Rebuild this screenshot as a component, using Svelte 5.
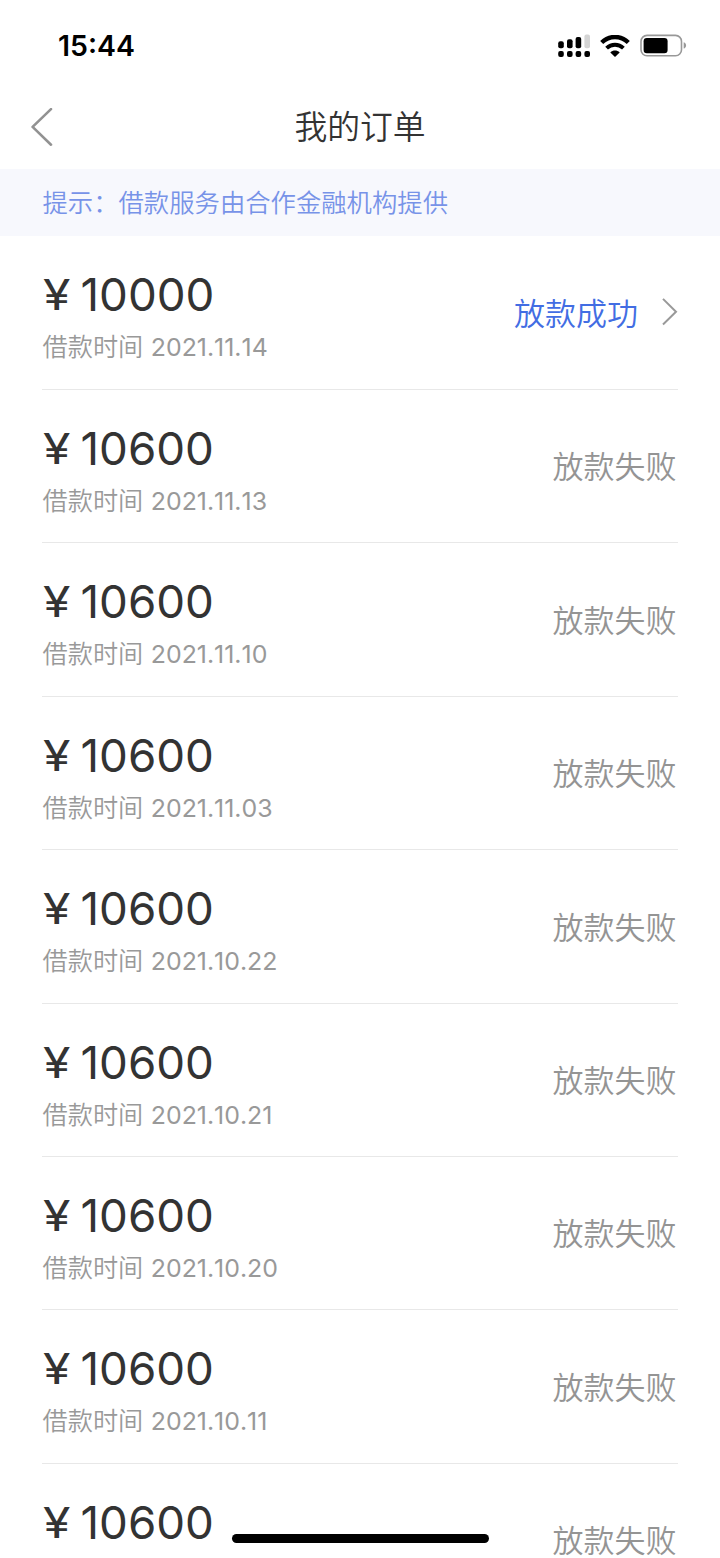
<script>
  const orders = [
    { amount: '10000', date: '2021.11.14', ok: true },
    { amount: '10600', date: '2021.11.13' },
    { amount: '10600', date: '2021.11.10' },
    { amount: '10600', date: '2021.11.03' },
    { amount: '10600', date: '2021.10.22' },
    { amount: '10600', date: '2021.10.21' },
    { amount: '10600', date: '2021.10.20' },
    { amount: '10600', date: '2021.10.11' },
    { amount: '10600', date: '' }
  ];
</script>

<div class="screen">
  <div class="status-bar">
    <span class="clock">15:44</span>
    <div class="indicators">
      <svg class="signal" width="33" height="24" viewBox="0 0 33 24">
        <rect x="0.2" y="7.2" width="5.6" height="7" rx="2" />
        <rect x="9" y="5.2" width="5.6" height="9" rx="2" />
        <rect x="17.6" y="3" width="5.6" height="11.2" rx="2" />
        <rect x="26.4" y="0.6" width="5.6" height="13.6" rx="2" fill="#d4d4d4" />
        <rect x="0.2" y="17" width="5.6" height="6" rx="2" />
        <rect x="9" y="17" width="5.6" height="6" rx="2" />
        <rect x="17.6" y="17" width="5.6" height="6" rx="2" />
        <rect x="26.4" y="17" width="5.6" height="6" rx="2" />
      </svg>
      <svg class="wifi" width="30" height="23" viewBox="0 0 30 23">
        <path d="M1.7 7.5C9.3 0.1 20.7 0.1 28.3 7.5" fill="none" stroke="#000" stroke-width="4.4" />
        <path d="M6.6 13.1C11.4 8.7 18.6 8.7 23.4 13.1" fill="none" stroke="#000" stroke-width="4" />
        <path d="M10.3 17.4C13 14.9 17 14.9 19.7 17.4L15 22Z" />
      </svg>
      <svg class="battery" width="47" height="24" viewBox="0 0 47 24">
        <rect x="1" y="1.4" width="40.5" height="20.4" rx="6" fill="none" stroke="#989898" stroke-width="1.6" />
        <rect x="3.6" y="4" width="24" height="15.2" rx="3.2" />
        <path d="M43.7 8.2C46.9 9.2 46.9 13.6 43.7 14.6Z" fill="#989898" />
      </svg>
    </div>
  </div>

  <header>
    <svg class="back" width="24" height="40" viewBox="0 0 24 40">
      <path d="M21 1.1L2.6 18.9L21 36.7" fill="none" stroke="#929292" stroke-width="2.6" stroke-linecap="round" stroke-linejoin="round" />
    </svg>
    <h1>我的订单</h1>
  </header>

  <div class="notice">提示：借款服务由合作金融机构提供</div>

  <main>
    {#each orders as order}
      <div class="order">
        <div class="info">
          <div class="amount"><span class="yen">¥</span><span>{order.amount}</span></div>
          {#if order.date}
            <div class="date"><span class="label">借款时间</span><span>{order.date}</span></div>
          {/if}
        </div>
        <div class="state" class:success={order.ok}>
          <span>{order.ok ? '放款成功' : '放款失败'}</span>
          {#if order.ok}
            <svg width="17" height="30" viewBox="0 0 17 30">
              <path d="M2 2.9L15 15.7L2 28.5" fill="none" stroke="#999" stroke-width="2" />
            </svg>
          {/if}
        </div>
      </div>
    {/each}
  </main>
  <div class="home-bar"></div>
</div>

<style>
  .screen {
    position: relative;
    width: 720px;
    height: 1558px;
    overflow: hidden;
    background: #fff;
    color: #333;
    font-family: Inter, "Noto Sans CJK SC", sans-serif;
  }
  .status-bar {
    height: 86px;
    box-sizing: border-box;
    padding: 6px 33px 0 58px;
    display: flex;
    align-items: center;
    justify-content: space-between;
    color: #000;
  }
  .clock {
    font-size: 28.5px;
    font-weight: 600;
    line-height: 34px;
  }
  .indicators {
    display: flex;
    align-items: center;
  }
  .signal { margin-right: 9px; }
  .wifi { margin-right: 10px; }
  header {
    height: 83px;
    display: grid;
    grid-template-columns: 60px 1fr 60px;
    align-items: center;
  }
  .back { margin-left: 30px; }
  h1 {
    margin: 0 0 1px;
    text-align: center;
    font-size: 32.8px;
    line-height: 48px;
    font-weight: 350;
  }
  .notice {
    height: 67px;
    padding-left: 42.5px;
    box-sizing: border-box;
    line-height: 67px;
    font-size: 25.35px;
    font-weight: 350;
    color: #7793e8;
    background: #f7f8fd;
  }
  main { padding: 0 42px; }
  .order {
    height: 153.45px;
    box-sizing: border-box;
    border-bottom: 1px solid #e8e8e8;
    display: flex;
    justify-content: space-between;
  }
  .order:first-child { height: 153.8px; }
  .info { padding-top: 31px; }
  .amount {
    display: flex;
    align-items: baseline;
    font-size: 45.7px;
    line-height: 55px;
  }
  .yen {
    width: 38.5px;
    font-size: 43px;
    transform: translate(1px, -1.5px) scaleX(1.16);
    transform-origin: left;
  }
  .date {
    display: flex;
    gap: 7.5px;
    margin-top: 7px;
    padding-left: 0.5px;
    font-size: 24.9px;
    line-height: 35px;
    color: #999;
    font-kerning: none;
  }
  .label {
    font-size: 25.2px;
    font-weight: 350;
  }
  .state {
    display: flex;
    align-items: center;
    height: 150px;
    padding-right: 1.5px;
    font-size: 31px;
    font-weight: 350;
    color: #949494;
  }
  .state.success {
    padding-right: 0;
    gap: 23px;
    height: 150px;
    color: #426de3;
  }
  .home-bar {
    position: absolute;
    left: 232px;
    top: 1534px;
    width: 257px;
    height: 9px;
    border-radius: 5px;
    background: #000;
  }
</style>
